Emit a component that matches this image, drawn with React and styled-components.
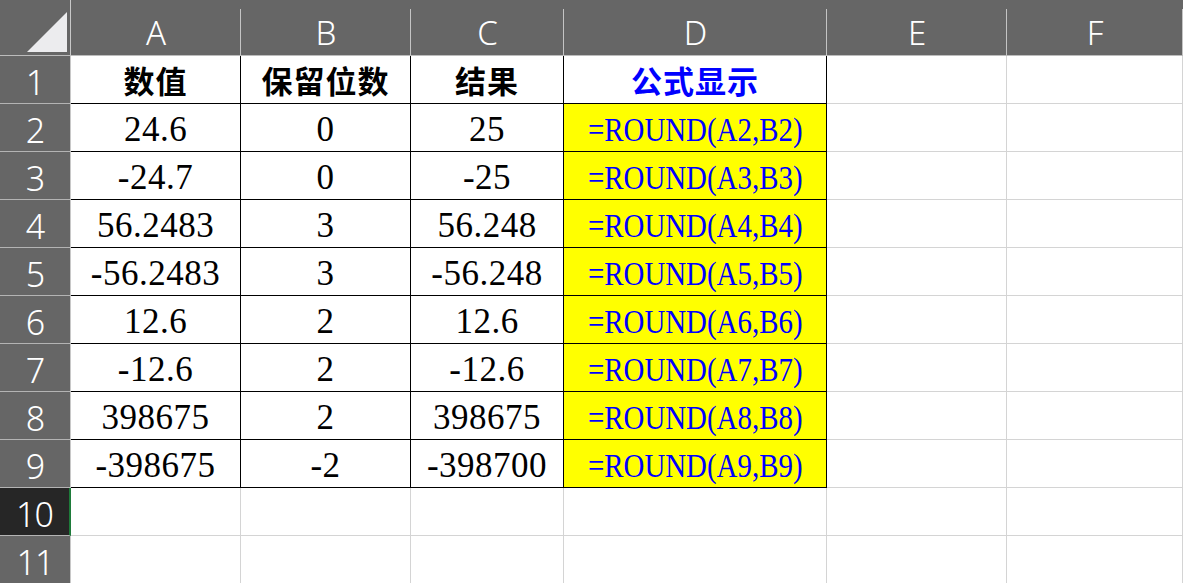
import styled, { createGlobalStyle } from 'styled-components';

const GlobalStyle = createGlobalStyle`
	html, body {
		margin: 0;
		padding: 0;
		background: #ffffff;
		overflow: hidden;
	}
`;

const Sheet = styled.div`
	display: grid;
	grid-template-columns: 71px 170px 170px 153px 263px 180px 1fr;
	grid-template-rows: 56px repeat(11, 48px);
	width: 1183px;
	height: 583px;
	overflow: hidden;
	background: #ffffff;
`;

const Corner = styled.div`
	background: #666666;
	border-bottom: 1px solid #bcbcbc;
	display: flex;
	align-items: flex-end;
	justify-content: flex-end;
	padding: 0 3px 3px 0;
	box-sizing: border-box;
	border-right: 1px solid #c8c8c8;
`;

const ColHead = styled.div`
	background:
		linear-gradient(#c4c4c4, #c4c4c4) right bottom / 1px calc(100% - 9px) no-repeat,
		#666666;
	border-bottom: 1px solid #bcbcbc;
	color: #ffffff;
	font-family: 'Noto Sans', 'Open Sans', sans-serif;
	font-size: 33px;
	font-weight: 300;
	display: flex;
	align-items: center;
	justify-content: center;
	padding-top: 10px;
	box-sizing: border-box;
`;

const RowHead = styled.div`
	background: ${(p) => (p.$active ? '#262626' : '#666666')};
	border-bottom: 1px solid #b4b4b4;
	border-right: ${(p) => (p.$active ? '2px solid #1e7b3a' : '1px solid #c8c8c8')};
	color: #ffffff;
	font-family: 'Noto Sans', 'Open Sans', sans-serif;
	font-size: 34px;
	font-weight: 300;
	letter-spacing: -1px;
	display: flex;
	align-items: center;
	justify-content: center;
	box-sizing: border-box;
	padding-top: 4px;
`;

const Cell = styled.div`
	box-sizing: border-box;
	border-right: 1px solid ${(p) => (p.$boxed ? '#000000' : '#d4d4d4')};
	border-bottom: 1px solid ${(p) => (p.$boxed ? '#000000' : '#d4d4d4')};
	background: ${(p) => (p.$fill ? '#ffff00' : '#ffffff')};
	display: flex;
	align-items: center;
	justify-content: center;
	white-space: nowrap;
	overflow: visible;
`;

const Title = styled.span`
	font-family: 'Noto Sans CJK SC', sans-serif;
	font-size: 31px;
	font-weight: 700;
	color: ${(p) => p.$color || '#000000'};
	letter-spacing: 1px;
`;

const Num = styled.span`
	font-family: 'Liberation Serif', serif;
	font-size: 35px;
	color: #000000;
	padding-top: 4px;
	letter-spacing: 0.5px;
`;

const Formula = styled.span`
	display: inline-block;
	font-family: 'Liberation Serif', serif;
	font-size: 34px;
	color: #0000ff;
	padding-top: 4px;
	transform: scaleX(0.85);
`;

const columns = ['A', 'B', 'C', 'D', 'E', 'F'];

const data = [
	['24.6', '0', '25', '=ROUND(A2,B2)'],
	['-24.7', '0', '-25', '=ROUND(A3,B3)'],
	['56.2483', '3', '56.248', '=ROUND(A4,B4)'],
	['-56.2483', '3', '-56.248', '=ROUND(A5,B5)'],
	['12.6', '2', '12.6', '=ROUND(A6,B6)'],
	['-12.6', '2', '-12.6', '=ROUND(A7,B7)'],
	['398675', '2', '398675', '=ROUND(A8,B8)'],
	['-398675', '-2', '-398700', '=ROUND(A9,B9)'],
];

const App = () => {
	return (
		<>
			<GlobalStyle />
			<Sheet>
				<Corner>
					<svg width='40' height='40' viewBox='0 0 40 40'>
						<polygon points='0,40 40,0 40,40' fill='#ececee' />
					</svg>
				</Corner>
				{columns.map((c) => (
					<ColHead key={c}>{c}</ColHead>
				))}

				<RowHead>1</RowHead>
				<Cell $boxed>
					<Title>数值</Title>
				</Cell>
				<Cell $boxed>
					<Title>保留位数</Title>
				</Cell>
				<Cell $boxed>
					<Title>结果</Title>
				</Cell>
				<Cell $boxed>
					<Title $color='#0000ff'>公式显示</Title>
				</Cell>
				<Cell />
				<Cell />

				{data.map((row, i) => (
					<Row key={i} index={i + 2} row={row} />
				))}

				<RowHead $active>10</RowHead>
				{columns.map((c) => (
					<Cell key={c} />
				))}
				<RowHead>11</RowHead>
				{columns.map((c) => (
					<Cell key={c} />
				))}
			</Sheet>
		</>
	);
};

const Row = ({ index, row }) => (
	<>
		<RowHead>{index}</RowHead>
		<Cell $boxed>
			<Num>{row[0]}</Num>
		</Cell>
		<Cell $boxed>
			<Num>{row[1]}</Num>
		</Cell>
		<Cell $boxed>
			<Num>{row[2]}</Num>
		</Cell>
		<Cell $boxed $fill>
			<Formula>{row[3]}</Formula>
		</Cell>
		<Cell />
		<Cell />
	</>
);

export default App;
